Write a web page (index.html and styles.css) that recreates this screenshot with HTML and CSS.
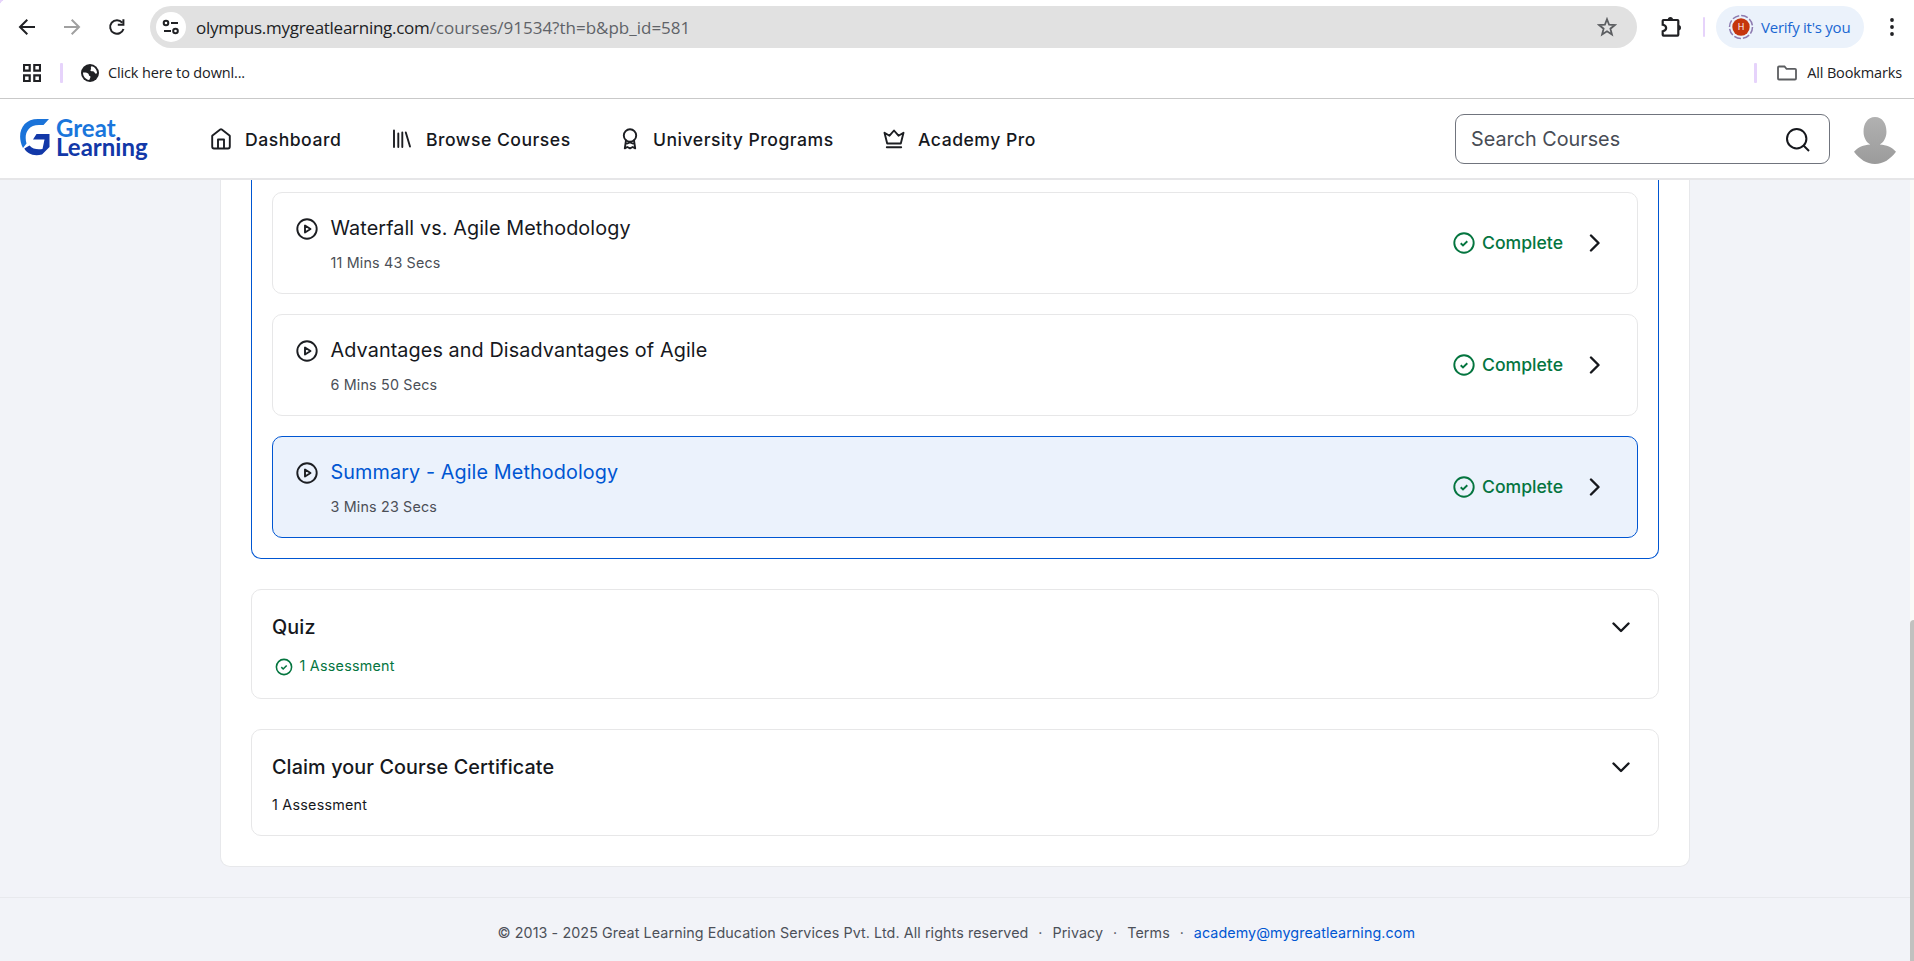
FILE: index.html
```html
<!DOCTYPE html>
<html lang="en">
<head>
<meta charset="utf-8">
<title>Great Learning - Agile Methodology</title>
<link rel="stylesheet" href="styles.css">
</head>
<body>
<div class="chrome">
  <div class="toolbar">
    <div class="nav-buttons">
      <svg class="back" width="18" height="18" viewBox="0 0 18 18"><path d="M17 9H2.500M9.300 1.800 2 9l7.300 7.200" /></svg>
      <svg class="forward" width="18" height="18" viewBox="0 0 18 18"><path d="M1 9h14.500M8.700 1.800 16 9l-7.300 7.200" /></svg>
      <svg class="reload" width="18" height="18" viewBox="0 0 18 18"><path d="M14.200 4.600A6.800 6.800 0 1 0 15.500 11M15.400 1.300v5.500H9.800" /></svg>
    </div>
    <div class="omnibox">
      <span class="site-info">
        <svg width="18" height="16" viewBox="0 0 18 16"><circle cx="4" cy="4" r="2.300"/><path d="M9 4h7M2 12h7"/><circle cx="13.500" cy="12" r="2.300"/></svg>
      </span>
      <span class="url"><b>olympus.mygreatlearning.com</b>/courses/91534?th=b&amp;pb_id=581</span>
      <svg class="star" width="20" height="20" viewBox="0 0 20 20"><path d="m10 2.200 2.100 5.500 5.800.3-4.500 3.700 1.500 5.700-4.900-3.200-4.900 3.200 1.500-5.700L2.100 8l5.800-.3z"/></svg>
    </div>
    <svg class="puzzle" width="22" height="22" viewBox="0 0 22 22"><path class="line" d="M3.500 4h14q.8 0 .8.800v14q0 .8-.8.800h-14q-.8 0-.8-.8v-3.500c4.600-1 4.600-5.500 0-6.500v-4q0-.8.800-.8z"/><path class="knob" d="M7.800 3.500a2.600 2.600 0 0 1 5.200 0zM18.300 9a2.700 2.700 0 0 1 0 5.400z"/></svg>
    <i class="divider"></i>
    <div class="verify">
      <svg width="26" height="26" viewBox="0 0 26 26"><circle class="ring" cx="13" cy="13" r="11.500"/><circle class="disc" cx="13" cy="13" r="8.700"/><text x="13" y="16.300">H</text></svg>
      <span>Verify it's you</span>
    </div>
    <svg class="kebab" width="4" height="18" viewBox="0 0 4 18"><circle cx="2" cy="2" r="1.900"/><circle cx="2" cy="9" r="1.900"/><circle cx="2" cy="16" r="1.900"/></svg>
  </div>
  <div class="bookmarks">
    <svg class="apps" width="18" height="18" viewBox="0 0 18 18"><path d="M1 1h5.700v5.700H1zM11.300 1H17v5.700h-5.700zM1 11.300h5.700V17H1zM11.300 11.300H17V17h-5.700z"/></svg>
    <i class="divider"></i>
    <svg class="globe" width="18" height="18" viewBox="0 0 18 18"><circle cx="9" cy="9" r="9"/><path d="M2 8.500c2.200-.2 4.600.2 5.400 1.300.8 1 .2 2 1.500 2.200 1.100.2.500 1.900-.7 4-3.800-.6-6.300-3.800-6.200-7.500zM10.500 2.200c3.300.6 5.500 3.600 5.500 6.800-1 1.300-2 .7-2.600-.7-.6-1.200-2.600-.6-3.600-1.200-1-.8.400-1.600.2-2.700-.1-.9-.4-1.700.5-2.200z"/></svg>
    <span class="bookmark">Click here to downl...</span>
    <i class="divider right"></i>
    <svg class="folder" width="20" height="16" viewBox="0 0 20 16"><path d="M2 1.500h5.500l2 2.300H18q1 0 1 1v8.700q0 1-1 1H2q-1 0-1-1v-11q0-1 1-1z"/></svg>
    <span class="all">All Bookmarks</span>
  </div>
</div>

<header class="header">
  <a class="logo">
    <svg width="30" height="38" viewBox="0 0 30 38"><path class="light" d="M29 1 23.500 7H19C7 7 4 17 6.500 25.500L3 30C-4 16 2 1 18 1z"/><path class="dark" d="M16.500 16H29.500V29L22 36.500C13 38.500 7 35.500 4.300 30.500L9.500 27.500C12.500 31.500 18 31.500 22.500 31L24.500 21.500H13z"/></svg>
    <span class="brand"><span class="great">Great</span><span class="learning">Learning</span></span>
  </a>
  <nav class="menu">
    <a class="m1"><svg width="20" height="22" viewBox="0 0 20 22"><path d="M1.200 8.400Q1 7.900 1.500 7.400L9.200 1.500Q10 1 10.800 1.500L18.500 7.400Q19 7.900 18.800 8.400V18.500Q18.800 20.500 17 20.500H3Q1.200 20.500 1.200 18.500zM7 20.500V11.500H13V20.500"/></svg><span>Dashboard</span></a>
    <a class="m2"><svg width="20" height="20" viewBox="0 0 20 20"><path d="M2 1.500v16.500M6.300 4.500V18M10.300 3.500V18M13.800 3.500 18 17.500"/></svg><span>Browse Courses</span></a>
    <a class="m3"><svg width="16" height="22" viewBox="0 0 16 22"><circle cx="8" cy="7.500" r="6.200"/><path d="M4 12.500 2.800 20.300 5.300 19 8 20.300l2.700-1.300 2.500 1.300L12 12.500M5.300 15.500 8 14.300l2.700 1.200"/></svg><span>University Programs</span></a>
    <a class="m4"><svg width="22" height="20" viewBox="0 0 22 20"><path d="M4.200 14.500 1.500 3.700 6.500 6.700 11 1.500l4.500 5.200 5-3-2.700 10.800zM3.800 18.300h14.400"/></svg><span>Academy Pro</span></a>
  </nav>
  <div class="search">
    <span>Search Courses</span>
    <svg width="24" height="24" viewBox="0 0 24 24"><circle cx="10.700" cy="10.700" r="9.700"/><path d="m17.500 17.500 5.500 5.500"/></svg>
  </div>
  <svg class="avatar" width="42" height="47" viewBox="0 0 44 48" preserveAspectRatio="none"><defs><linearGradient id="shade" x1="0" y1="0" x2="0" y2="1"><stop offset="0" stop-color="#b1b1b1"/><stop offset="1" stop-color="#9b9b9b"/></linearGradient></defs><path fill="url(#shade)" d="M22 0C30 0 34 7 34 15 34 21 31 26 27 28 34 28.500 40 30.500 44 35.500 38 43 31 48 22 48S6 43 0 35.500C4 30.500 10 28.500 17 28 13 26 10 21 10 15 10 7 14 0 22 0z"/></svg>
</header>

<div class="page">
  <main class="content">
    <div class="course">
      <section class="lessons">
        <article class="lesson">
          <svg class="play" width="22" height="22" viewBox="0 0 22 22"><circle cx="11" cy="11" r="9.700"/><path d="M9 7.500v7l5.500-3.500z"/></svg>
          <div class="info"><h3>Waterfall vs. Agile Methodology</h3><p>11 Mins 43 Secs</p></div>
          <svg class="check" width="22" height="22" viewBox="0 0 22 22"><circle cx="11" cy="11" r="9.700"/><path d="m7.700 11.200 2.300 2.200 4.300-4.200"/></svg>
          <span class="status">Complete</span>
          <svg class="next" width="12" height="18" viewBox="0 0 12 18"><path d="M2 1.500 9.500 9 2 16.500"/></svg>
        </article>
        <article class="lesson">
          <svg class="play" width="22" height="22" viewBox="0 0 22 22"><circle cx="11" cy="11" r="9.700"/><path d="M9 7.500v7l5.500-3.500z"/></svg>
          <div class="info"><h3>Advantages and Disadvantages of Agile</h3><p>6 Mins 50 Secs</p></div>
          <svg class="check" width="22" height="22" viewBox="0 0 22 22"><circle cx="11" cy="11" r="9.700"/><path d="m7.700 11.200 2.300 2.200 4.300-4.200"/></svg>
          <span class="status">Complete</span>
          <svg class="next" width="12" height="18" viewBox="0 0 12 18"><path d="M2 1.500 9.500 9 2 16.500"/></svg>
        </article>
        <article class="lesson current">
          <svg class="play" width="22" height="22" viewBox="0 0 22 22"><circle cx="11" cy="11" r="9.700"/><path d="M9 7.500v7l5.500-3.500z"/></svg>
          <div class="info"><h3>Summary - Agile Methodology</h3><p>3 Mins 23 Secs</p></div>
          <svg class="check" width="22" height="22" viewBox="0 0 22 22"><circle cx="11" cy="11" r="9.700"/><path d="m7.700 11.200 2.300 2.200 4.300-4.200"/></svg>
          <span class="status">Complete</span>
          <svg class="next" width="12" height="18" viewBox="0 0 12 18"><path d="M2 1.500 9.500 9 2 16.500"/></svg>
        </article>
      </section>
      <section class="module quiz">
        <div class="module-head"><h2>Quiz</h2><svg class="expand" width="18" height="12" viewBox="0 0 18 12"><path d="M1.500 1.500 9 9l7.500-7.500"/></svg></div>
        <div class="module-note done"><svg class="check" width="18" height="18" viewBox="0 0 22 22"><circle cx="11" cy="11" r="9.300"/><path d="m7.700 11.200 2.300 2.200 4.300-4.200"/></svg><span>1 Assessment</span></div>
      </section>
      <section class="module claim">
        <div class="module-head"><h2>Claim your Course Certificate</h2><svg class="expand" width="18" height="12" viewBox="0 0 18 12"><path d="M1.500 1.500 9 9l7.500-7.500"/></svg></div>
        <div class="module-note"><span>1 Assessment</span></div>
      </section>
    </div>
    <footer class="footer">
      <span>© 2013 - 2025 Great Learning Education Services Pvt. Ltd. All rights reserved</span><span class="dot">·</span><span>Privacy</span><span class="dot">·</span><span>Terms</span><span class="dot">·</span><a class="email">academy@mygreatlearning.com</a>
    </footer>
  </main>
  <div class="scrollbar"><div class="thumb"></div></div>
</div>
</body>
</html>
```
FILE: styles.css
```css
* { box-sizing: border-box; }
body { margin: 0; width: 1914px; height: 961px; overflow: hidden; font-family: Inter, "Liberation Sans", sans-serif; color: #16181d; background: #fff; }
svg { display: block; flex: none; fill: none; }
h2, h3, p { margin: 0; font-weight: 400; }

.chrome { height: 99px; border-bottom: 1px solid #c9c9c9; font-family: "Open Sans", "Noto Sans", sans-serif; color: #202124; background: radial-gradient(circle at 6px 6px, #fff 6px, #e6d3fb 6.500px) 0 0 / 6px 6px no-repeat; }
.toolbar { display: flex; align-items: center; height: 54px; padding: 0 20px 0 18px; }
.nav-buttons { display: flex; gap: 27px; width: 132px; }
.nav-buttons svg { stroke: #202124; stroke-width: 2; }
.nav-buttons .forward { stroke: #a0a0a0; }
.omnibox { display: flex; align-items: center; width: 1487px; height: 42px; padding: 0 20px 0 6px; border-radius: 21px; background: #e1e1e1; }
.site-info { display: grid; place-items: center; width: 30px; height: 30px; margin-right: 10px; border-radius: 50%; background: #fff; }
.site-info svg { stroke: #202124; stroke-width: 2; }
.url { margin-right: auto; font-size: 17px; color: #5f6368; white-space: nowrap; }
.url b { font-weight: 400; letter-spacing: -.27px; color: #202124; }
.star { stroke: #5c5e61; stroke-width: 1.800; }
.puzzle { margin-left: 23px; }
.puzzle .line { stroke: #202124; stroke-width: 2.200; }
.puzzle .knob { fill: #202124; }
.divider { display: block; width: 2px; height: 20px; border-radius: 1px; background: #e6d3fb; }
.toolbar .divider { margin-left: 21px; }
.verify { display: flex; align-items: center; width: 148px; height: 42px; margin-left: 11px; padding-left: 12px; border-radius: 21px; background: #ebf2fb; font-size: 15px; letter-spacing: -.24px; color: #1967d2; white-space: nowrap; }
.verify svg { margin-right: 7px; }
.verify span { margin-top: -1px; }
.ring { stroke: #8d7bb0; stroke-width: 1.500; stroke-dasharray: 7 2; }
.disc { fill: #c5350c; }
.verify text { font: 9px "Open Sans", sans-serif; letter-spacing: 0; fill: #fff; text-anchor: middle; }
.kebab { margin-left: 26px; fill: #202124; }
.bookmarks { display: flex; align-items: center; height: 38px; padding: 0 12px 0 23px; font-size: 14.500px; letter-spacing: -.14px; white-space: nowrap; }
.bookmarks span { margin-top: -2px; }
.apps { stroke: #202124; stroke-width: 2.200; }
.apps + .divider { width: 3px; margin: 0 18px 0 19px; }
.globe { margin-right: 9px; }
.globe circle { fill: #202124; }
.globe path { fill: #fff; }
.divider.right { width: 3px; margin: 0 20px 0 auto; }
.folder { margin-right: 10px; stroke: #5c5e61; stroke-width: 1.800; }

.header { display: flex; align-items: center; height: 81px; padding: 0 18px 0 20px; border-bottom: 2px solid #e6e6e8; }
.logo { display: flex; align-items: flex-start; width: 191px; height: 42px; }
.logo .light { fill: #1a73d9; }
.logo .dark { fill: #1238a8; }
.brand { display: flex; flex-direction: column; margin-left: 6px; font: 700 24px/19.500px Lato, sans-serif; }
.great { color: #1a76dc; }
.learning { color: #1238a8; }
.menu { display: flex; align-items: center; font-size: 17.600px; font-weight: 500; white-space: nowrap; }
.menu a { display: flex; align-items: center; }
.menu svg { stroke: #1c1e22; stroke-width: 1.900; stroke-linejoin: round; stroke-linecap: round; }
.menu span { margin-top: 2px; letter-spacing: .5px; }
.m1 { width: 181px; }
.m1 span { margin-left: 14px; }
.m2 { width: 230px; }
.m2 span { margin-left: 14px; }
.m3 { width: 261px; }
.m3 span { margin-left: 15px; }
.m4 span { margin-left: 13px; }
.search { display: flex; align-items: center; justify-content: space-between; width: 375px; height: 50px; margin-left: auto; padding: 0 19px 0 15px; border: 1px solid #70747d; border-radius: 9px; font-size: 19.800px; color: #484c55; }
.search svg { margin-top: 3px; stroke: #16181d; stroke-width: 2; }
.avatar { margin: 3px 0 0 24px; }

.page { display: flex; height: 781px; }
.content { flex: 1; background: #f2f3f8; }
.course { width: 1470px; height: 687px; margin-left: 220px; padding: 0 30px 30px; border: 1px solid #e7e8eb; border-top: 0; border-radius: 0 0 10px 10px; background: #fff; }
.lessons { height: 379px; padding: 12px 20px 0; border: 1px solid #0056d2; border-top: 0; border-radius: 0 0 10px 10px; }
.lesson { display: flex; align-items: flex-start; height: 102px; margin-bottom: 20px; padding: 0 36px 0 23px; border: 1px solid #e7e7e8; border-radius: 10px; }
.lesson.current { border-color: #0056d2; background: #ebf2fc; }
.play { margin-top: 25px; stroke: #1c1e22; stroke-width: 1.900; stroke-linejoin: round; }
.info { flex: 1; margin: 23px 0 0 12.500px; white-space: nowrap; }
.info h3 { font-size: 19.800px; line-height: 24px; letter-spacing: .1px; }
.info p { margin-top: 13px; font-size: 14.300px; line-height: 20px; letter-spacing: .18px; color: #4b4f57; }
.info .current h3, .current h3 { color: #0056d2; }
.check { stroke: #04753f; stroke-width: 1.900; }
.lesson .check { margin-top: 39px; }
.status { margin: 39px 26px 0 7px; font-size: 17.600px; line-height: 22px; font-weight: 500; color: #04753f; }
.next, .expand { stroke: #16181d; stroke-width: 2.400; stroke-linecap: round; stroke-linejoin: round; }
.next { margin-top: 41px; }
.module { margin-top: 30px; padding: 0 28px 0 20px; border: 1px solid #e7e7e8; border-radius: 10px; }
.quiz { height: 110px; }
.claim { height: 107px; }
.module-head { display: flex; align-items: center; justify-content: space-between; padding-top: 25px; }
.module h2 { font-size: 19.800px; line-height: 24px; font-weight: 500; letter-spacing: .1px; }
.expand { margin-top: 2px; }
.module-note { display: flex; align-items: center; height: 20px; margin-top: 17px; font-size: 14.300px; line-height: 20px; letter-spacing: .25px; }
.claim .module-note { margin-top: 16px; }
.done { padding-left: 3px; color: #04753f; }
.done svg { margin: 1px 6.500px 0 0; }
.footer { display: flex; height: 64px; margin-top: 30px; padding: 23px 0 0 497.500px; border-top: 1px solid #e8e9ed; font-size: 14.300px; line-height: 24px; letter-spacing: .09px; color: #4c5059; white-space: nowrap; }
.dot { width: 24px; text-align: center; }
.email { color: #0056d2; }
.scrollbar { width: 4px; padding-top: 440px; background: #fafaf8; }
.thumb { height: 341px; border-radius: 4px 0 0 0; background: #c1c1bf; }
```
